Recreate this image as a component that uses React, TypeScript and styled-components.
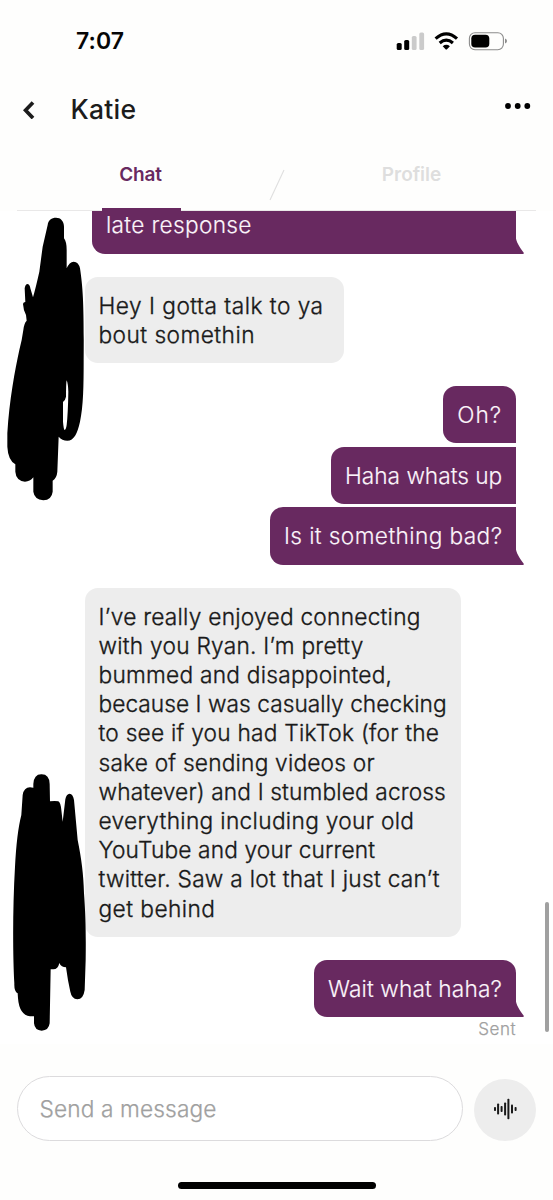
import React from 'react';
import styled, { createGlobalStyle, css } from 'styled-components';

const PLUM = '#682960';
const FONT = "Inter, 'Liberation Sans', sans-serif";

const GlobalStyle = createGlobalStyle`
  *, *::before, *::after { box-sizing: border-box; }
  body { margin: 0; background: #fefefd; font-family: ${FONT}; }
`;

const Screen = styled.div`
  display: flex;
  flex-direction: column;
  width: 553px;
  height: 1200px;
  overflow: hidden;
  background: #fefefd;
`;

const Line = styled.span<{ $tracking?: number }>`
  display: block;
  white-space: pre;
  letter-spacing: ${(p) => p.$tracking ?? 0}px;
`;

const Header = styled.header`
  display: flex;
  flex-direction: column;
  flex: none;
  height: 211px;
`;

const StatusBar = styled.div`
  display: flex;
  align-items: center;
  justify-content: space-between;
  height: 82px;
  padding: 0 46px 0 76px;
`;

const Clock = styled.div`
  font-size: 23px;
  font-weight: 600;
  letter-spacing: 0.1px;
  color: #060606;
`;

const StatusIcons = styled.svg`
  display: block;
  width: 111px;
  height: 20px;
`;

const TitleBar = styled.div`
  display: flex;
  align-items: center;
  height: 56px;
  padding: 0 22px 2px 23px;
`;

const BackIcon = styled.svg`
  width: 12px;
  height: 18px;
  margin: 1px 35.5px 0 0;
`;

const Title = styled.h1`
  flex: 1;
  margin: 0;
  font-size: 26.5px;
  font-weight: 500;
  letter-spacing: 0.26px;
  color: #1c1c1c;
`;

const MoreIcon = styled.svg`
  width: 27px;
  height: 8px;
  margin-bottom: 6px;
`;

const Tabs = styled.nav`
  display: flex;
  justify-content: space-between;
  height: 73px;
  margin: 0 17px;
  border-bottom: 1px solid #e9e8e8;
`;

const Tab = styled.div<{ $active?: boolean }>`
  display: flex;
  justify-content: center;
  width: 248px;
  padding-top: 24px;
  font-size: 19px;
  line-height: 25px;
  font-weight: 600;
  color: ${(p) => (p.$active ? PLUM : '#dedede')};
`;

const TabLabel = styled.div<{ $active?: boolean }>`
  display: flex;
  justify-content: center;
  width: 79px;
  height: 49px;
  padding-right: 1px;
  letter-spacing: ${(p) => (p.$active ? -0.15 : -0.05)}px;
  ${(p) => p.$active && css`border-bottom: 3px solid ${PLUM};`}
`;

const TabSlash = styled.svg`
  width: 16px;
  height: 32px;
  margin-top: 31px;
`;

const Messages = styled.main`
  position: relative;
  display: flex;
  flex-direction: column;
  justify-content: flex-end;
  flex: none;
  height: 833px;
  padding: 0 36.8px 4px 84.5px;
  overflow: hidden;
  background: #fff;
`;

const Group = styled.section<{ $mine?: boolean; $last?: boolean }>`
  display: flex;
  flex: none;
  flex-direction: column;
  align-items: ${(p) => (p.$mine ? 'flex-end' : 'flex-start')};
  gap: 3.4px;
  margin-bottom: ${(p) => (p.$last ? 0 : 23.1)}px;
`;

const Bubble = styled.div<{ $mine?: boolean; $w: number; $corners?: string }>`
  position: relative;
  width: ${(p) => p.$w}px;
  padding: 14px 0 14px 14px;
  border-radius: ${(p) => p.$corners ?? '13px'};
  background: ${(p) => (p.$mine ? PLUM : '#ededed')};
  color: ${(p) => (p.$mine ? '#fbf4fa' : '#191919')};
  font-size: 22.7px;
  font-weight: 300;
  line-height: 29.18px;
  -webkit-text-stroke: ${(p) => (p.$mine ? 0.15 : 0.35)}px currentColor;
`;

const TailShape = styled.svg`
  position: absolute;
  left: calc(100% - 1px);
  bottom: 0;
  width: 9px;
  height: 17px;
`;

const Receipt = styled.div`
  align-self: flex-end;
  height: 23px;
  font-size: 17px;
  line-height: 25.5px;
  font-weight: 300;
  letter-spacing: 0.55px;
  color: #a0a0a0;
  -webkit-text-stroke: 0.25px currentColor;
`;

const Scribble = styled.svg<{ $top: number }>`
  position: absolute;
  left: 0;
  top: ${(p) => p.$top}px;
  width: 90px;
  height: 310px;
`;

const ScrollThumb = styled.div`
  position: absolute;
  right: 4px;
  top: 691px;
  width: 4.5px;
  height: 129.5px;
  border-radius: 3px;
  background: #a0a0a0;
`;

const Composer = styled.footer`
  display: flex;
  align-items: flex-start;
  gap: 11px;
  flex: none;
  height: 138px;
  padding: 32px 17px 0;
`;

const Field = styled.div`
  display: flex;
  align-items: center;
  width: 446px;
  height: 65px;
  padding-left: 21.5px;
  border: 1.5px solid #dcdbdd;
  border-radius: 33px;
  background: #fff;
  font-size: 22.7px;
  font-weight: 300;
  letter-spacing: 0.12px;
  color: #a0a0a0;
  -webkit-text-stroke: 0.25px currentColor;
`;

const VoiceButton = styled.div`
  display: grid;
  place-items: center;
  width: 62px;
  height: 62px;
  margin-top: 3px;
  border-radius: 50%;
  background: #ededed;
`;

const VoiceIcon = styled.svg`
  width: 62px;
  height: 62px;
`;

const HomeBar = styled.div`
  align-self: center;
  width: 198px;
  height: 7px;
  border-radius: 4px;
  background: #000;
`;

function Tail() {
  return (
    <TailShape viewBox="0 0 9 17">
      <path d="M0 0H0.8C1.2 5 4.5 10 8.6 15.5Q9.2 17 8 17H0Z" fill={PLUM} />
    </TailShape>
  );
}

const INTRO: [string, number][] = [
  ['Hey I gotta talk to ya', 0.49],
  ['bout somethin', 0.46],
];

const LONG_MESSAGE: [string, number][] = [
  ['I’ve really enjoyed connecting', 0.25],
  ['with you Ryan. I’m pretty', 0.25],
  ['bummed and disappointed,', 0.24],
  ['because I was casually checking', 0.04],
  ['to see if you had TikTok (for the', 0.24],
  ['sake of sending videos or', 0.2],
  ['whatever) and I stumbled across', 0.14],
  ['everything including your old', 0.32],
  ['YouTube and your current', 0.15],
  ['twitter. Saw a lot that I just can’t', 0.28],
  ['get behind', 0.45],
];

// [centre x, bar height] of each bar inside the 62px voice button
const WAVE = [
  [21, 4], [24.1, 11], [27.6, 6], [31.1, 13], [34.4, 20.5], [38, 9], [41.6, 4],
];

export default function App() {
  return (
    <Screen>
      <GlobalStyle />
      <Header>
        <StatusBar>
          <Clock>7:07</Clock>
          <StatusIcons viewBox="396 31 111 20">
            <rect x="396.7" y="43" width="5" height="7" rx="1.6" />
            <rect x="404.2" y="40" width="5" height="10" rx="1.6" />
            <rect x="411.8" y="36" width="4.8" height="14" rx="1.6" fill="#cbcbcb" />
            <rect x="419.3" y="32.4" width="4.8" height="17.6" rx="1.6" fill="#cbcbcb" />
            <g fill="none" stroke="#000" strokeWidth="3.2">
              <path d="M435.6 38.6Q446.3 29.2 457 38.6" />
              <path d="M439.7 43Q446.3 37.3 452.9 43" />
            </g>
            <path d="M442.7 46.2Q446.3 43.4 449.9 46.2L446.8 49.4Q446.3 49.8 445.8 49.4Z" />
            <rect x="469.4" y="32.7" width="34" height="17" rx="5.6" fill="none" stroke="#8c8c8c" strokeWidth="1.1" />
            <rect x="471.3" y="34.8" width="18" height="12.8" rx="3.8" />
            <path d="M505 38.6Q507 39.4 507 41Q507 42.6 505 43.4Z" fill="#8c8c8c" />
          </StatusIcons>
        </StatusBar>
        <TitleBar>
          <BackIcon viewBox="0 0 12 18">
            <path d="M10 1.5L2.5 9.3L10 17.1" fill="none" stroke="#1c1c1c" strokeWidth="3.7" />
          </BackIcon>
          <Title>Katie</Title>
          <MoreIcon viewBox="0 0 27 8">
            <circle cx="4" cy="4" r="2.9" />
            <circle cx="13.7" cy="4" r="2.9" />
            <circle cx="23.3" cy="4" r="2.9" />
          </MoreIcon>
        </TitleBar>
        <Tabs>
          <Tab $active><TabLabel $active>Chat</TabLabel></Tab>
          <TabSlash viewBox="0 0 16 32">
            <path d="M15 1L1 31" stroke="#dfdfdf" strokeWidth="1.1" />
          </TabSlash>
          <Tab><TabLabel>Profile</TabLabel></Tab>
        </Tabs>
      </Header>

      <Messages>
        <Group $mine>
          <Bubble $mine $w={424.2} $corners="13px 13px 0 13px">
            <Line $tracking={0.3}>late response</Line>
            <Tail />
          </Bubble>
        </Group>
        <Group>
          <Bubble $w={259.5}>
            {INTRO.map(([text, tracking]) => <Line key={text} $tracking={tracking}>{text}</Line>)}
          </Bubble>
        </Group>
        <Group $mine>
          <Bubble $mine $w={73} $corners="13px 13px 0 13px"><Line $tracking={1}>Oh?</Line></Bubble>
          <Bubble $mine $w={185.2} $corners="13px 0 0 13px"><Line $tracking={-0.02}>Haha whats up</Line></Bubble>
          <Bubble $mine $w={246.2} $corners="13px 0 0 13px">
            <Line $tracking={0.38}>Is it something bad?</Line>
            <Tail />
          </Bubble>
        </Group>
        <Group>
          <Bubble $w={376.5}>
            {LONG_MESSAGE.map(([text, tracking]) => <Line key={text} $tracking={tracking}>{text}</Line>)}
          </Bubble>
        </Group>
        <Group $mine $last>
          <Bubble $mine $w={202.2} $corners="13px 13px 0 13px">
            <Line $tracking={0.12}>Wait what haha?</Line>
            <Tail />
          </Bubble>
        </Group>
        <Receipt>Sent</Receipt>

        <Scribble $top={-11} viewBox="0 0 270 930">
          <path
            fillRule="evenodd"
            d="M143 75C145 60 155 53 168 53C182 53 192 63 192 80V115Q200 125 200 150V205Q208 186 221 185Q236 186 240 205C250 270 252 330 251 480C251 560 250 620 240 665C232 700 222 722 202 722Q186 722 176 710L172 815Q170 835 158 842V875Q155 900 130 901Q103 898 100 875V832Q90 845 75 845Q48 842 46 815V793Q24 780 22 740V700C28 600 45 510 58 450Q66 420 70 390Q72 370 80 362L78 345Q70 330 69 312Q70 306 76 306L74 265Q76 252 83 252Q90 254 91 265L99 292Q108 260 118 215L128 140ZM200 541Q198 548 198 590Q196 601 189 606V665Q191 689 194 690Q198 689 200 675Q204 640 205 575Q204 550 200 541Z"
          />
        </Scribble>
        <Scribble $top={549} viewBox="0 0 270 930">
          <path d="M100 72Q102 42 125 43Q148 43 149 72L150 124Q165 122 175 124Q182 128 184 150L188 185L196 118Q199 102 209 101Q219 102 222 120L233 240C245 300 250 340 252 400C257 470 258 520 257 600L254 690Q250 718 232 718Q215 716 211 695Q203 660 198 622Q184 622 178 609Q174 628 160 628H152L149 790Q146 812 125 812Q104 811 102 790V769H90Q58 765 54 715L53 700Q42 695 43 670C38 580 38 440 45 320Q50 220 64 165L68 105Q72 82 90 82L100 83Z" />
        </Scribble>
        <ScrollThumb />
      </Messages>

      <Composer>
        <Field>Send a message</Field>
        <VoiceButton>
          <VoiceIcon viewBox="0 0 62 62">
            {WAVE.map(([x, h]) => (
              <rect key={x} x={x - 1} y={30 - h / 2} width="2" height={h} rx="0.8" fill="#1a1a1a" />
            ))}
          </VoiceIcon>
        </VoiceButton>
      </Composer>
      <HomeBar />
    </Screen>
  );
}
